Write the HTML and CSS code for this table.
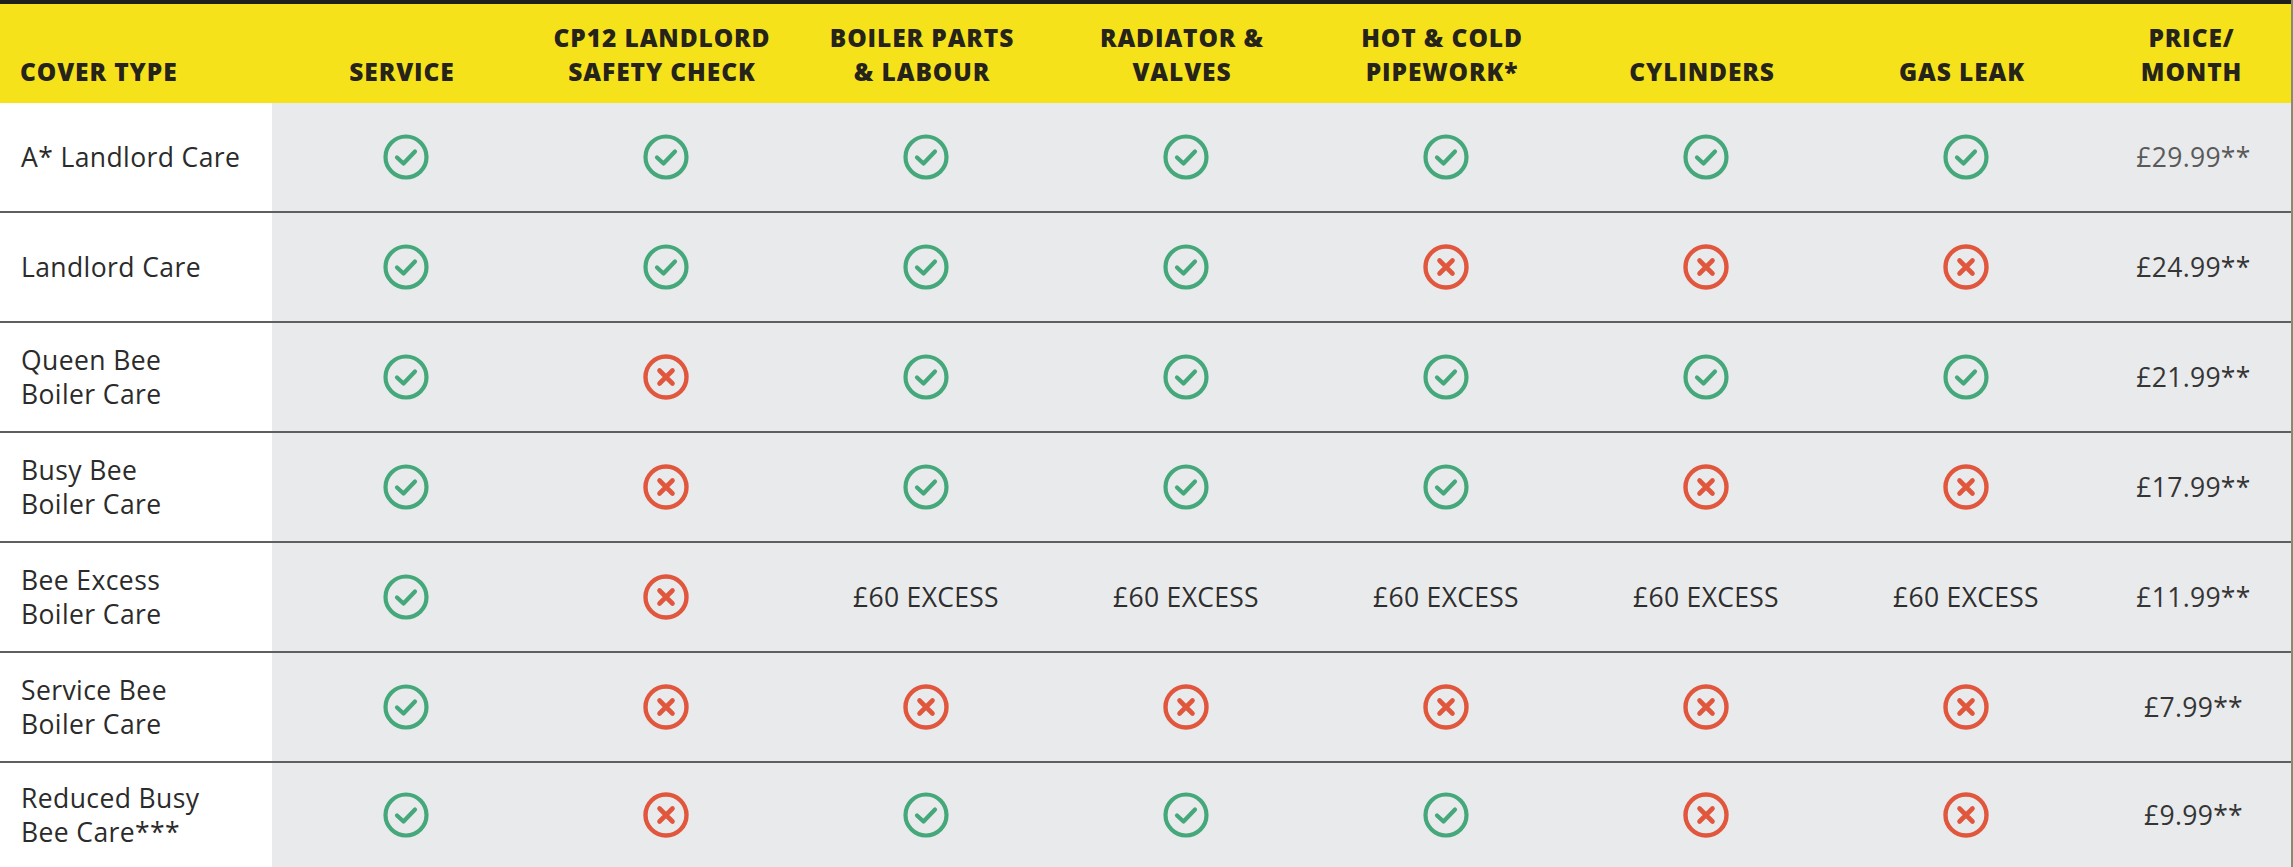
FILE: index.html
```html
<!DOCTYPE html>
<html lang="en">
<head>
<meta charset="utf-8">
<title>Cover comparison</title>
<link rel="stylesheet" href="styles.css">
</head>
<body>
<svg class="defs" width="0" height="0" aria-hidden="true">
  <symbol id="ok" viewBox="0 0 46 46">
    <circle cx="23" cy="23" r="20.5" fill="none" stroke="currentColor" stroke-width="4.2"/>
    <path d="M14 23.5 L20.5 29.5 L32 17.5" fill="none" stroke="currentColor" stroke-width="4.2" stroke-linecap="round" stroke-linejoin="round"/>
  </symbol>
  <symbol id="no" viewBox="0 0 46 46">
    <circle cx="23" cy="23" r="20.5" fill="none" stroke="currentColor" stroke-width="4.4"/>
    <path d="M16.5 16.5 L29.5 29.5 M29.5 16.5 L16.5 29.5" fill="none" stroke="currentColor" stroke-width="4.6" stroke-linecap="round"/>
  </symbol>
</svg>

<div class="sheet">
  <div class="topbar"></div>
  <div class="head">
    <div class="hcell first">COVER TYPE</div>
    <div class="hcell">SERVICE</div>
    <div class="hcell">CP12 LANDLORD<br>SAFETY CHECK</div>
    <div class="hcell">BOILER PARTS<br>&amp; LABOUR</div>
    <div class="hcell">RADIATOR &amp;<br>VALVES</div>
    <div class="hcell">HOT &amp; COLD<br>PIPEWORK*</div>
    <div class="hcell">CYLINDERS</div>
    <div class="hcell">GAS LEAK</div>
    <div class="hcell">PRICE/<br>MONTH</div>
  </div>

  <div class="row">
    <div class="label">A* Landlord Care</div>
    <div class="cell"><svg class="ic yes"><use href="#ok"/></svg></div>
    <div class="cell"><svg class="ic yes"><use href="#ok"/></svg></div>
    <div class="cell"><svg class="ic yes"><use href="#ok"/></svg></div>
    <div class="cell"><svg class="ic yes"><use href="#ok"/></svg></div>
    <div class="cell"><svg class="ic yes"><use href="#ok"/></svg></div>
    <div class="cell"><svg class="ic yes"><use href="#ok"/></svg></div>
    <div class="cell"><svg class="ic yes"><use href="#ok"/></svg></div>
    <div class="cell price light">£29.99**</div>
  </div>

  <div class="row">
    <div class="label">Landlord Care</div>
    <div class="cell"><svg class="ic yes"><use href="#ok"/></svg></div>
    <div class="cell"><svg class="ic yes"><use href="#ok"/></svg></div>
    <div class="cell"><svg class="ic yes"><use href="#ok"/></svg></div>
    <div class="cell"><svg class="ic yes"><use href="#ok"/></svg></div>
    <div class="cell"><svg class="ic nope"><use href="#no"/></svg></div>
    <div class="cell"><svg class="ic nope"><use href="#no"/></svg></div>
    <div class="cell"><svg class="ic nope"><use href="#no"/></svg></div>
    <div class="cell price">£24.99**</div>
  </div>

  <div class="row">
    <div class="label">Queen Bee<br>Boiler Care</div>
    <div class="cell"><svg class="ic yes"><use href="#ok"/></svg></div>
    <div class="cell"><svg class="ic nope"><use href="#no"/></svg></div>
    <div class="cell"><svg class="ic yes"><use href="#ok"/></svg></div>
    <div class="cell"><svg class="ic yes"><use href="#ok"/></svg></div>
    <div class="cell"><svg class="ic yes"><use href="#ok"/></svg></div>
    <div class="cell"><svg class="ic yes"><use href="#ok"/></svg></div>
    <div class="cell"><svg class="ic yes"><use href="#ok"/></svg></div>
    <div class="cell price">£21.99**</div>
  </div>

  <div class="row">
    <div class="label">Busy Bee<br>Boiler Care</div>
    <div class="cell"><svg class="ic yes"><use href="#ok"/></svg></div>
    <div class="cell"><svg class="ic nope"><use href="#no"/></svg></div>
    <div class="cell"><svg class="ic yes"><use href="#ok"/></svg></div>
    <div class="cell"><svg class="ic yes"><use href="#ok"/></svg></div>
    <div class="cell"><svg class="ic yes"><use href="#ok"/></svg></div>
    <div class="cell"><svg class="ic nope"><use href="#no"/></svg></div>
    <div class="cell"><svg class="ic nope"><use href="#no"/></svg></div>
    <div class="cell price">£17.99**</div>
  </div>

  <div class="row">
    <div class="label">Bee Excess<br>Boiler Care</div>
    <div class="cell"><svg class="ic yes"><use href="#ok"/></svg></div>
    <div class="cell"><svg class="ic nope"><use href="#no"/></svg></div>
    <div class="cell text">£60 EXCESS</div>
    <div class="cell text">£60 EXCESS</div>
    <div class="cell text">£60 EXCESS</div>
    <div class="cell text">£60 EXCESS</div>
    <div class="cell text">£60 EXCESS</div>
    <div class="cell price">£11.99**</div>
  </div>

  <div class="row">
    <div class="label">Service Bee<br>Boiler Care</div>
    <div class="cell"><svg class="ic yes"><use href="#ok"/></svg></div>
    <div class="cell"><svg class="ic nope"><use href="#no"/></svg></div>
    <div class="cell"><svg class="ic nope"><use href="#no"/></svg></div>
    <div class="cell"><svg class="ic nope"><use href="#no"/></svg></div>
    <div class="cell"><svg class="ic nope"><use href="#no"/></svg></div>
    <div class="cell"><svg class="ic nope"><use href="#no"/></svg></div>
    <div class="cell"><svg class="ic nope"><use href="#no"/></svg></div>
    <div class="cell price">£7.99**</div>
  </div>

  <div class="row last">
    <div class="label">Reduced Busy<br>Bee Care***</div>
    <div class="cell"><svg class="ic yes"><use href="#ok"/></svg></div>
    <div class="cell"><svg class="ic nope"><use href="#no"/></svg></div>
    <div class="cell"><svg class="ic yes"><use href="#ok"/></svg></div>
    <div class="cell"><svg class="ic yes"><use href="#ok"/></svg></div>
    <div class="cell"><svg class="ic yes"><use href="#ok"/></svg></div>
    <div class="cell"><svg class="ic nope"><use href="#no"/></svg></div>
    <div class="cell"><svg class="ic nope"><use href="#no"/></svg></div>
    <div class="cell price">£9.99**</div>
  </div>
</div>
</body>
</html>
```

FILE: styles.css
```css
html, body {
  margin: 0;
  padding: 0;
  background: #e9eaec;
}

body {
  font-family: "Open Sans", "Liberation Sans", sans-serif;
  width: 2293px;
  height: 867px;
  overflow: hidden;
}

.defs {
  position: absolute;
  width: 0;
  height: 0;
  overflow: hidden;
}

.sheet {
  display: flex;
  flex-direction: column;
  height: 867px;
  border-right: 2px solid #8a8a70;
  box-sizing: border-box;
}

.topbar {
  height: 4px;
  background: #1f1f1c;
  flex: none;
}

.head,
.row {
  display: grid;
  grid-template-columns: 272px repeat(7, 260px) 1fr;
}

.head {
  height: 99px;
  background: #f6e21b;
  flex: none;
}

.hcell {
  display: flex;
  align-items: flex-end;
  justify-content: center;
  text-align: center;
  padding-bottom: 14px;
  font-weight: 800;
  font-size: 24.5px;
  line-height: 34px;
  letter-spacing: 0.9px;
  color: #26241a;
}

.hcell.first {
  justify-content: flex-start;
  text-align: left;
  padding-left: 20px;
}

.row {
  height: 110px;
  box-sizing: border-box;
  border-bottom: 2px solid #5f5f5f;
  flex: none;
}

.row.last {
  border-bottom: none;
  flex: 1;
  height: auto;
}

.label {
  background: #ffffff;
  display: flex;
  align-items: center;
  padding-left: 21px;
  font-size: 26.5px;
  line-height: 34px;
  letter-spacing: 0.4px;
  color: #2b2b2b;
}

.cell {
  display: flex;
  align-items: center;
  justify-content: center;
  padding-left: 8px;
  font-size: 26.5px;
  color: #2e2e2e;
}

.cell.text {
  letter-spacing: 0.3px;
}

.cell.price {
  padding-left: 4px;
  color: #353535;
  letter-spacing: 0.3px;
}

.cell.price.light {
  color: #5a5a5a;
}

.ic {
  width: 46px;
  height: 46px;
}

.ic.yes {
  color: #45a87a;
}

.ic.nope {
  color: #e0573d;
}
```
